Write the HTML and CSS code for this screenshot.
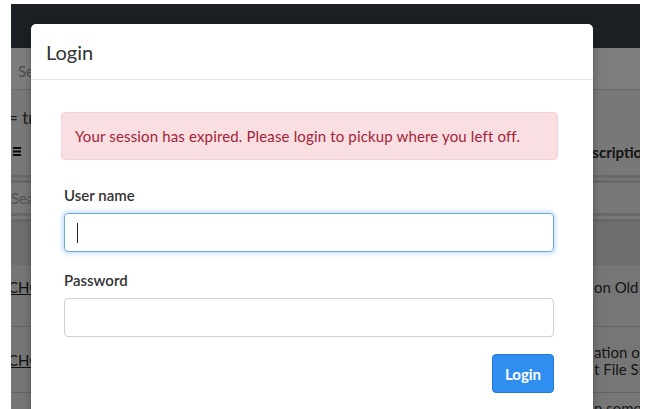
FILE: index.html
```html
<!DOCTYPE html>
<html lang="en">
<head>
<meta charset="utf-8">
<title>Login</title>
<link rel="stylesheet" href="styles.css">
</head>
<body>
<div class="screen">
  <div class="page">
    <div class="navbar"></div>
    <div class="searchbar"><span class="search-input">Search...</span></div>
    <div class="filter-text">= true</div>
    <div class="thead">
      <span class="hamburger"><svg width="8" height="9" viewBox="0 0 8 9"><rect x="0" y="0" width="8" height="2"/><rect x="0" y="3.5" width="8" height="2"/><rect x="0" y="7" width="8" height="2"/></svg></span>
      <span class="th-desc">Description</span>
    </div>
    <div class="tfilter"><span class="ph">Search</span></div>
    <div class="tgroup"></div>
    <div class="trow r1"><a class="link" href="#">CHG-1041</a><span class="desc">on Old Tapes</span></div>
    <div class="trow r2"><a class="link" href="#">CHG-1042</a><span class="desc">ation of<br>t File Size</span></div>
    <div class="trow r3"><span></span><span class="desc">n some</span></div>
  </div>
  <div class="backdrop"></div>
  <div class="modal">
    <div class="modal-header"><h4 class="modal-title">Login</h4></div>
    <div class="modal-body">
      <div class="alert">Your session has expired. Please login to pickup where you left off.</div>
      <form class="form">
        <label class="label" for="user">User name</label>
        <div class="input focus"><span class="caret"></span></div>
        <label class="label second" for="pass">Password</label>
        <div class="input"></div>
        <div class="actions"><button type="button" class="btn">Login</button></div>
      </form>
    </div>
  </div>
</div>
</body>
</html>
```
FILE: styles.css
```css
html, body {
  margin: 0;
  padding: 0;
  background: #ffffff;
  font-family: Lato, "Open Sans", sans-serif;
}
.screen {
  position: relative;
  margin: 4px 12px 0 11px;
  height: 405px;
  overflow: hidden;
  background: #f0f0f0;
}
.page {
  display: flex;
  flex-direction: column;
  font-size: 14px;
  color: #333;
}
.navbar {
  height: 44px;
  background: #39414b;
}
.searchbar {
  height: 41px;
  background: #fafafa;
  border-bottom: 1px solid #d8d8d8;
  display: flex;
  align-items: center;
}
.search-input {
  margin-left: 7px;
  color: #999;
  font-size: 15px;
  margin-top: 4px;
}
.filter-text {
  height: 44px;
  display: flex;
  align-items: center;
  margin-left: -3px;
  font-size: 17px;
  color: #3a3a3a;
  padding-top: 10px;
  box-sizing: border-box;
}
.thead {
  background: #f0f0f0;
  border-bottom: 8px double #d0d0d0;
  display: flex;
  justify-content: space-between;
  align-items: center;
  box-sizing: border-box;
  height: 49px;
  padding-bottom: 6px;
}
.hamburger {
  margin-left: 2px;
  display: flex;
}
.hamburger svg { fill: #111; }
.th-desc {
  width: 67px;
  font-weight: 700;
  font-size: 15px;
  color: #2a2a2a;
  white-space: nowrap;
}
.tfilter {
  height: 30px;
  background: #f0f0f0;
  border-bottom: 9px double #d0d0d0;
  display: flex;
  align-items: center;
}
.ph {
  color: #a8a8a8;
  font-size: 15px;
  margin-left: 0;
}
.tgroup {
  height: 43px;
  background: #dcdcdc;
}
.trow {
  display: grid;
  grid-template-columns: 1fr 46px;
  align-items: start;
  background: #ececec;
  border-bottom: 1px solid #c8c8c8;
  font-size: 15px;
  color: #2c2c2c;
  box-sizing: border-box;
}
.r1 { height: 62px; padding-top: 14px; }
.r2 { height: 66px; padding-top: 17px; }
.r3 { height: 30px; padding-top: 7px; }
.link {
  color: #222;
  margin-left: -3px;
  text-decoration: underline;
  line-height: 17px;
}
.r2 .link { margin-top: 8px; }
.desc {
  white-space: nowrap;
  line-height: 17px;
}
.backdrop {
  position: absolute;
  inset: 0;
  background: rgba(0, 0, 0, 0.5);
}
.modal {
  position: absolute;
  left: 20px;
  top: 20px;
  width: 562px;
  height: 420px;
  background: #fff;
  border-radius: 5px 5px 0 0;
  box-shadow: 0 3px 9px rgba(0, 0, 0, 0.3);
}
.modal-header {
  height: 55px;
  border-bottom: 1px solid #e5e5e5;
  display: flex;
  align-items: center;
  padding: 0 15px;
}
.modal-title {
  margin: 0;
  font-size: 20px;
  font-weight: 400;
  color: #333;
  padding-top: 0;
}
.modal-body {
  padding: 32px 39px 0 30px;
}
.alert {
  height: 48px;
  box-sizing: border-box;
  background: #f9dfe1;
  border: 1px solid #f5d0d4;
  border-radius: 4px;
  color: #a3233a;
  font-size: 15px;
  letter-spacing: 0.15px;
  display: flex;
  align-items: center;
  padding: 0 13px;
  margin-right: -4px;
}
.form {
  display: flex;
  flex-direction: column;
  padding: 25px 0 0 3px;
}
.label {
  font-size: 15px;
  font-weight: 600;
  color: #333;
  line-height: 20px;
  margin-bottom: 8px;
}
.label.second { margin-top: 18px; }
.input {
  height: 39px;
  box-sizing: border-box;
  border: 1px solid #cfcfcf;
  border-radius: 4px;
  display: flex;
  align-items: center;
  padding-left: 12px;
}
.input.focus {
  border-color: #6ea6e6;
  box-shadow: 0 0 4px 2px rgba(102, 170, 240, 0.35);
}
.caret {
  width: 1px;
  height: 20px;
  background: #222;
}
.actions {
  display: flex;
  justify-content: flex-end;
  margin-top: 17px;
}
.btn {
  height: 39px;
  width: 62px;
  background: #2f8ef0;
  border: 1px solid #2079d6;
  border-radius: 4px;
  color: #fff;
  font-family: Lato, "Open Sans", sans-serif;
  font-size: 15px;
  font-weight: 700;
  padding: 0;
}
```
